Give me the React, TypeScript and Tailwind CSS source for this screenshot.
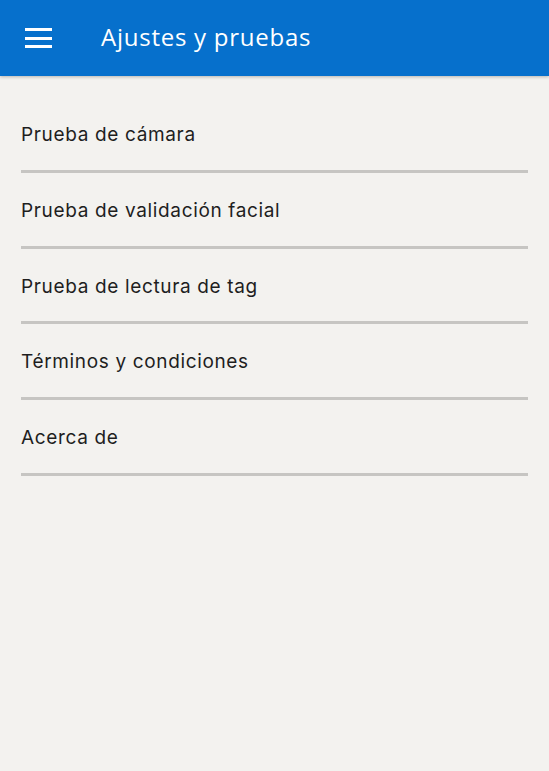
const items = [
  "Prueba de cámara",
  "Prueba de validación facial",
  "Prueba de lectura de tag",
  "Términos y condiciones",
  "Acerca de",
];

export default function App() {
  return (
    <div className="min-h-[771px] bg-[#f3f2ef] font-['Inter',sans-serif]">
      <header className="flex h-[76px] items-center bg-[#0670cc] shadow-[0_1px_3px_rgba(0,0,0,0.25)]">
        <button className="ml-[25px] flex h-[27px] w-[27px] flex-col justify-center gap-[5.5px]">
          <span className="h-[3px] w-[27px] bg-white" />
          <span className="h-[3px] w-[27px] bg-white" />
          <span className="h-[3px] w-[27px] bg-white" />
        </button>
        <h1 className="ml-[49px] -mt-[2px] font-['Open_Sans',sans-serif] text-[24px] tracking-[0.75px] text-white">
          Ajustes y pruebas
        </h1>
      </header>

      <ul className="px-[21px] pt-[21px]">
        {items.map((label) => (
          <li key={label}>
            <div className="pt-[26px] pb-[22.8px] text-[19px] leading-[24px] tracking-[0.65px] text-[#1e1e1e]">
              {label}
            </div>
            <div className="h-[3px] bg-[#c6c5c2]" />
          </li>
        ))}
      </ul>
    </div>
  );
}
